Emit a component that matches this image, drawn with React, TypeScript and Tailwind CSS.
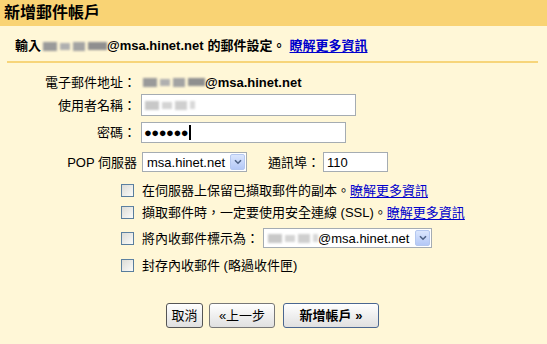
import React from "react";

const FONT = '"Liberation Sans", Arial, "Noto Sans CJK TC", sans-serif';

function Blur({ w, light }: { w: number; light?: boolean }) {
  return (
    <span className="inline-flex items-center gap-[3px] blur-[1.2px] align-middle" style={{ width: w }}>
      <span className={`inline-block h-[9px] w-[14px] ${light ? "bg-[#c8c8c8]" : "bg-[#9a9a9a]"}`} />
      <span className={`inline-block h-[7px] w-[10px] ${light ? "bg-[#d4d4d4]" : "bg-[#b0b0b0]"}`} />
      <span className={`inline-block h-[9px] w-[12px] ${light ? "bg-[#cfcfcf]" : "bg-[#a3a3a3]"}`} />
      <span className={`inline-block h-[8px] flex-1 ${light ? "bg-[#d8d8d8]" : "bg-[#8f8f8f]"}`} />
    </span>
  );
}

function Arrow() {
  return (
    <span className="flex h-[16px] w-[15px] items-center justify-center rounded-[2px] border border-[#b5c8f0] bg-gradient-to-b from-[#dbe6fd] to-[#b4c8f6]">
      <svg width="8" height="6" viewBox="0 0 8 6">
        <path d="M1 1.2 L4 4.2 L7 1.2" fill="none" stroke="#4d6185" strokeWidth="1.6" />
      </svg>
    </span>
  );
}

function Checkbox() {
  return <span className="inline-block h-[13px] w-[13px] shrink-0 border border-[#1c5180]/70 bg-gradient-to-br from-[#dcdcd7] to-[#fbfbf9]" />;
}

function Link({ children }: { children: React.ReactNode }) {
  return <span className="text-[#0000cc] underline underline-offset-2">{children}</span>;
}

export default function App() {
  return (
    <div className="h-[344px] w-[547px] bg-[#fff7d7] text-[13px] text-black" style={{ fontFamily: FONT }}>
      <div className="flex h-[26px] items-center bg-[#f9d374] pl-[4px] text-[16px] font-bold leading-none">新增郵件帳戶</div>
      <div className="mt-[10px] flex h-[18px] items-center pl-[15px] font-bold leading-none">
        <span>輸入</span>
        <span className="ml-[2px]"><Blur w={64} /></span>
        <span>@msa.hinet.net</span>
        <span className="ml-[4px]">的郵件設定。</span>
        <span className="ml-[4px]"><Link>瞭解更多資訊</Link></span>
      </div>
      <div className="ml-[7px] mr-[9px] mt-[7px] h-[2px] bg-[#f7d57a]" />

      <div className="mt-[9px] flex h-[20px] items-center leading-none">
        <span className="w-[136px] text-right">電子郵件地址：</span>
        <span className="ml-[7px] flex items-center font-bold"><Blur w={62} /><span>@msa.hinet.net</span></span>
      </div>

      <div className="mt-[2px] flex h-[22px] items-center leading-none">
        <span className="w-[136px] text-right">使用者名稱：</span>
        <span className="ml-[5px] flex h-[22px] w-[215px] items-center border border-[#a5acb2] bg-white pl-[3px]"><Blur w={50} light /></span>
      </div>

      <div className="mt-[6px] flex h-[21px] items-center leading-none">
        <span className="w-[136px] text-right">密碼：</span>
        <span className="ml-[5px] flex h-[21px] w-[205px] items-center border border-[#a5acb2] bg-white pl-[2px]">
          <span className="text-[13px] tracking-[-0.5px]">●●●●●●</span>
          <span className="ml-[1px] inline-block h-[15px] w-[2px] bg-black" />
        </span>
      </div>

      <div className="mt-[9px] flex h-[20px] items-center leading-none">
        <span className="w-[137px] text-right">POP 伺服器</span>
        <span className="ml-[5px] flex h-[20px] w-[105px] items-center justify-between border border-[#a5acb2] bg-white pl-[4px] pr-[1px]">
          <span>msa.hinet.net</span>
          <Arrow />
        </span>
        <span className="ml-[21px]">通訊埠：</span>
        <span className="ml-[3px] flex h-[20px] w-[65px] items-center border border-[#a5acb2] bg-white pl-[3px]">110</span>
      </div>

      <div className="mt-[8px] flex h-[20px] items-center pl-[121px] leading-none">
        <Checkbox />
        <span className="ml-[8px]">在伺服器上保留已擷取郵件的副本。</span>
        <Link>瞭解更多資訊</Link>
      </div>

      <div className="mt-[2px] flex h-[20px] items-center pl-[121px] leading-none">
        <Checkbox />
        <span className="ml-[8px]">擷取郵件時，一定要使用安全連線 (SSL)。</span>
        <Link>瞭解更多資訊</Link>
      </div>

      <div className="mt-[6px] flex h-[20px] items-center pl-[121px] leading-none">
        <Checkbox />
        <span className="ml-[8px]">將內收郵件標示為：</span>
        <span className="ml-[4px] flex h-[20px] w-[169px] items-center justify-between border border-[#a5acb2] bg-white pl-[4px] pr-[1px]">
          <span className="flex items-center"><Blur w={50} light /><span>@msa.hinet.net</span></span>
          <Arrow />
        </span>
      </div>

      <div className="mt-[7px] flex h-[20px] items-center pl-[121px] leading-none">
        <Checkbox />
        <span className="ml-[8px]">封存內收郵件 (略過收件匣)</span>
      </div>

      <div className="mt-[28px] flex items-center pl-[166px] leading-none">
        <span className="flex h-[25px] w-[37px] items-center justify-center rounded-[3px] border border-[#555] bg-gradient-to-b from-white to-[#e0e0e0]">取消</span>
        <span className="ml-[6px] flex h-[25px] w-[66px] items-center justify-center rounded-[3px] border border-[#777] bg-gradient-to-b from-white to-[#e0e0e0]">«上一步</span>
        <span className="ml-[8px] flex h-[25px] w-[96px] items-center justify-center rounded-[3px] border border-[#4a6690] bg-gradient-to-b from-white to-[#e0e0e0] font-bold">新增帳戶 »</span>
      </div>
    </div>
  );
}
